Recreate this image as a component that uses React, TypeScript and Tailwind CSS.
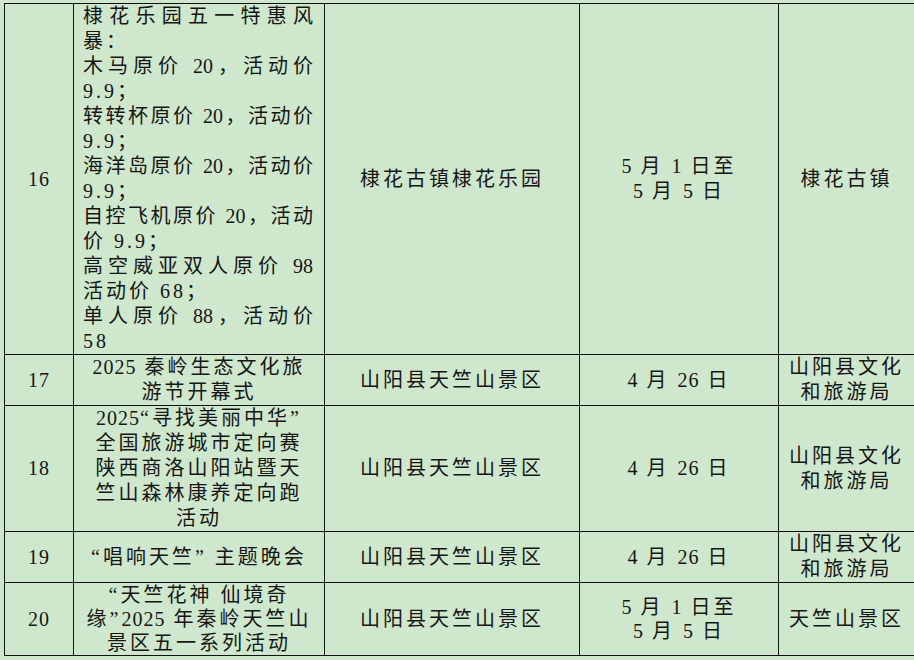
import React from 'react';

type Line = { text: string; full?: boolean };

// lines of row 16's description: full lines are stretched edge to edge
const promo: Line[] = [
  { text: '棣花乐园五一特惠风', full: true },
  { text: '暴：' },
  { text: '木马原价 20，活动价', full: true },
  { text: '9.9；' },
  { text: '转转杯原价 20，活动价', full: true },
  { text: '9.9；' },
  { text: '海洋岛原价 20，活动价', full: true },
  { text: '9.9；' },
  { text: '自控飞机原价 20，活动', full: true },
  { text: '价 9.9；' },
  { text: '高空威亚双人原价 98', full: true },
  { text: '活动价 68；' },
  { text: '单人原价 88，活动价', full: true },
  { text: '58' },
];

type Row = {
  no: string;
  title: string[];
  place: string[];
  date: string[];
  org: string[];
  tight?: boolean;
};

const rows: Row[] = [
  {
    no: '17',
    title: ['2025 秦岭生态文化旅', '游节开幕式'],
    place: ['山阳县天竺山景区'],
    date: ['4 月 26 日'],
    org: ['山阳县文化', '和旅游局'],
  },
  {
    no: '18',
    title: ['2025“寻找美丽中华”', '全国旅游城市定向赛', '陕西商洛山阳站暨天', '竺山森林康养定向跑', '活动'],
    place: ['山阳县天竺山景区'],
    date: ['4 月 26 日'],
    org: ['山阳县文化', '和旅游局'],
  },
  {
    no: '19',
    title: ['“唱响天竺” 主题晚会'],
    place: ['山阳县天竺山景区'],
    date: ['4 月 26 日'],
    org: ['山阳县文化', '和旅游局'],
  },
  {
    no: '20',
    title: ['“天竺花神 仙境奇', '缘”2025 年秦岭天竺山', '景区五一系列活动'],
    place: ['山阳县天竺山景区'],
    date: ['5 月 1 日至', '5 月 5 日'],
    org: ['天竺山景区'],
    tight: true,
  },
];

const cell = 'border border-[#111] align-middle text-center whitespace-nowrap';

// digits sit closer together than the Chinese characters
const Txt: React.FC<{ text: string }> = ({ text }) => (
  <>
    {text.split(/(\d[\d.]*\d|\d)/).map((part, i) =>
      /^\d/.test(part) ? (
        <span key={i} className="tracking-[1px]">
          {part}
        </span>
      ) : (
        part
      ),
    )}
  </>
);

const Lines: React.FC<{ lines: string[] }> = ({ lines }) => (
  <>
    {lines.map((l, i) => (
      <div key={i}>
        <Txt text={l} />
      </div>
    ))}
  </>
);

const App: React.FC = () => {
  return (
    <div className="min-h-[660px] w-full bg-[#cfe7cc] pt-[3px] pl-[4px] overflow-hidden">
      <table className="table-fixed border-collapse w-[910px] text-[20px] leading-[25px] tracking-[3px] text-[#161616] font-['Liberation_Serif','Noto_Sans_CJK_SC',serif]">
        <colgroup>
          <col className="w-[69px]" />
          <col className="w-[251px]" />
          <col className="w-[255px]" />
          <col className="w-[199px]" />
          <col className="w-[136px]" />
        </colgroup>
        <tbody>
          <tr>
            <td className={`${cell} tracking-[1px]`}>16</td>
            <td className="border border-[#111] align-middle pl-[9px] pr-[11px] whitespace-nowrap">
              {promo.map((l, i) => (
                <div
                  key={i}
                  className={
                    l.full
                      ? 'tracking-normal text-justify [text-align-last:justify]'
                      : 'text-left'
                  }
                >
                  {l.text}
                </div>
              ))}
            </td>
            <td className={cell}>棣花古镇棣花乐园</td>
            <td className={cell}>
              <Lines lines={['5 月 1 日至', '5 月 5 日']} />
            </td>
            <td className={cell}>棣花古镇</td>
          </tr>
          {rows.map((r) => (
            <tr key={r.no} className={r.tight ? 'leading-[24px]' : ''}>
              <td className={`${cell} tracking-[1px]`}>{r.no}</td>
              <td className={`${cell} px-[6px]`}>
                <Lines lines={r.title} />
              </td>
              <td className={cell}>
                <Lines lines={r.place} />
              </td>
              <td className={cell}>
                <Lines lines={r.date} />
              </td>
              <td className={cell}>
                <Lines lines={r.org} />
              </td>
            </tr>
          ))}
        </tbody>
      </table>
    </div>
  );
};

export default App;
